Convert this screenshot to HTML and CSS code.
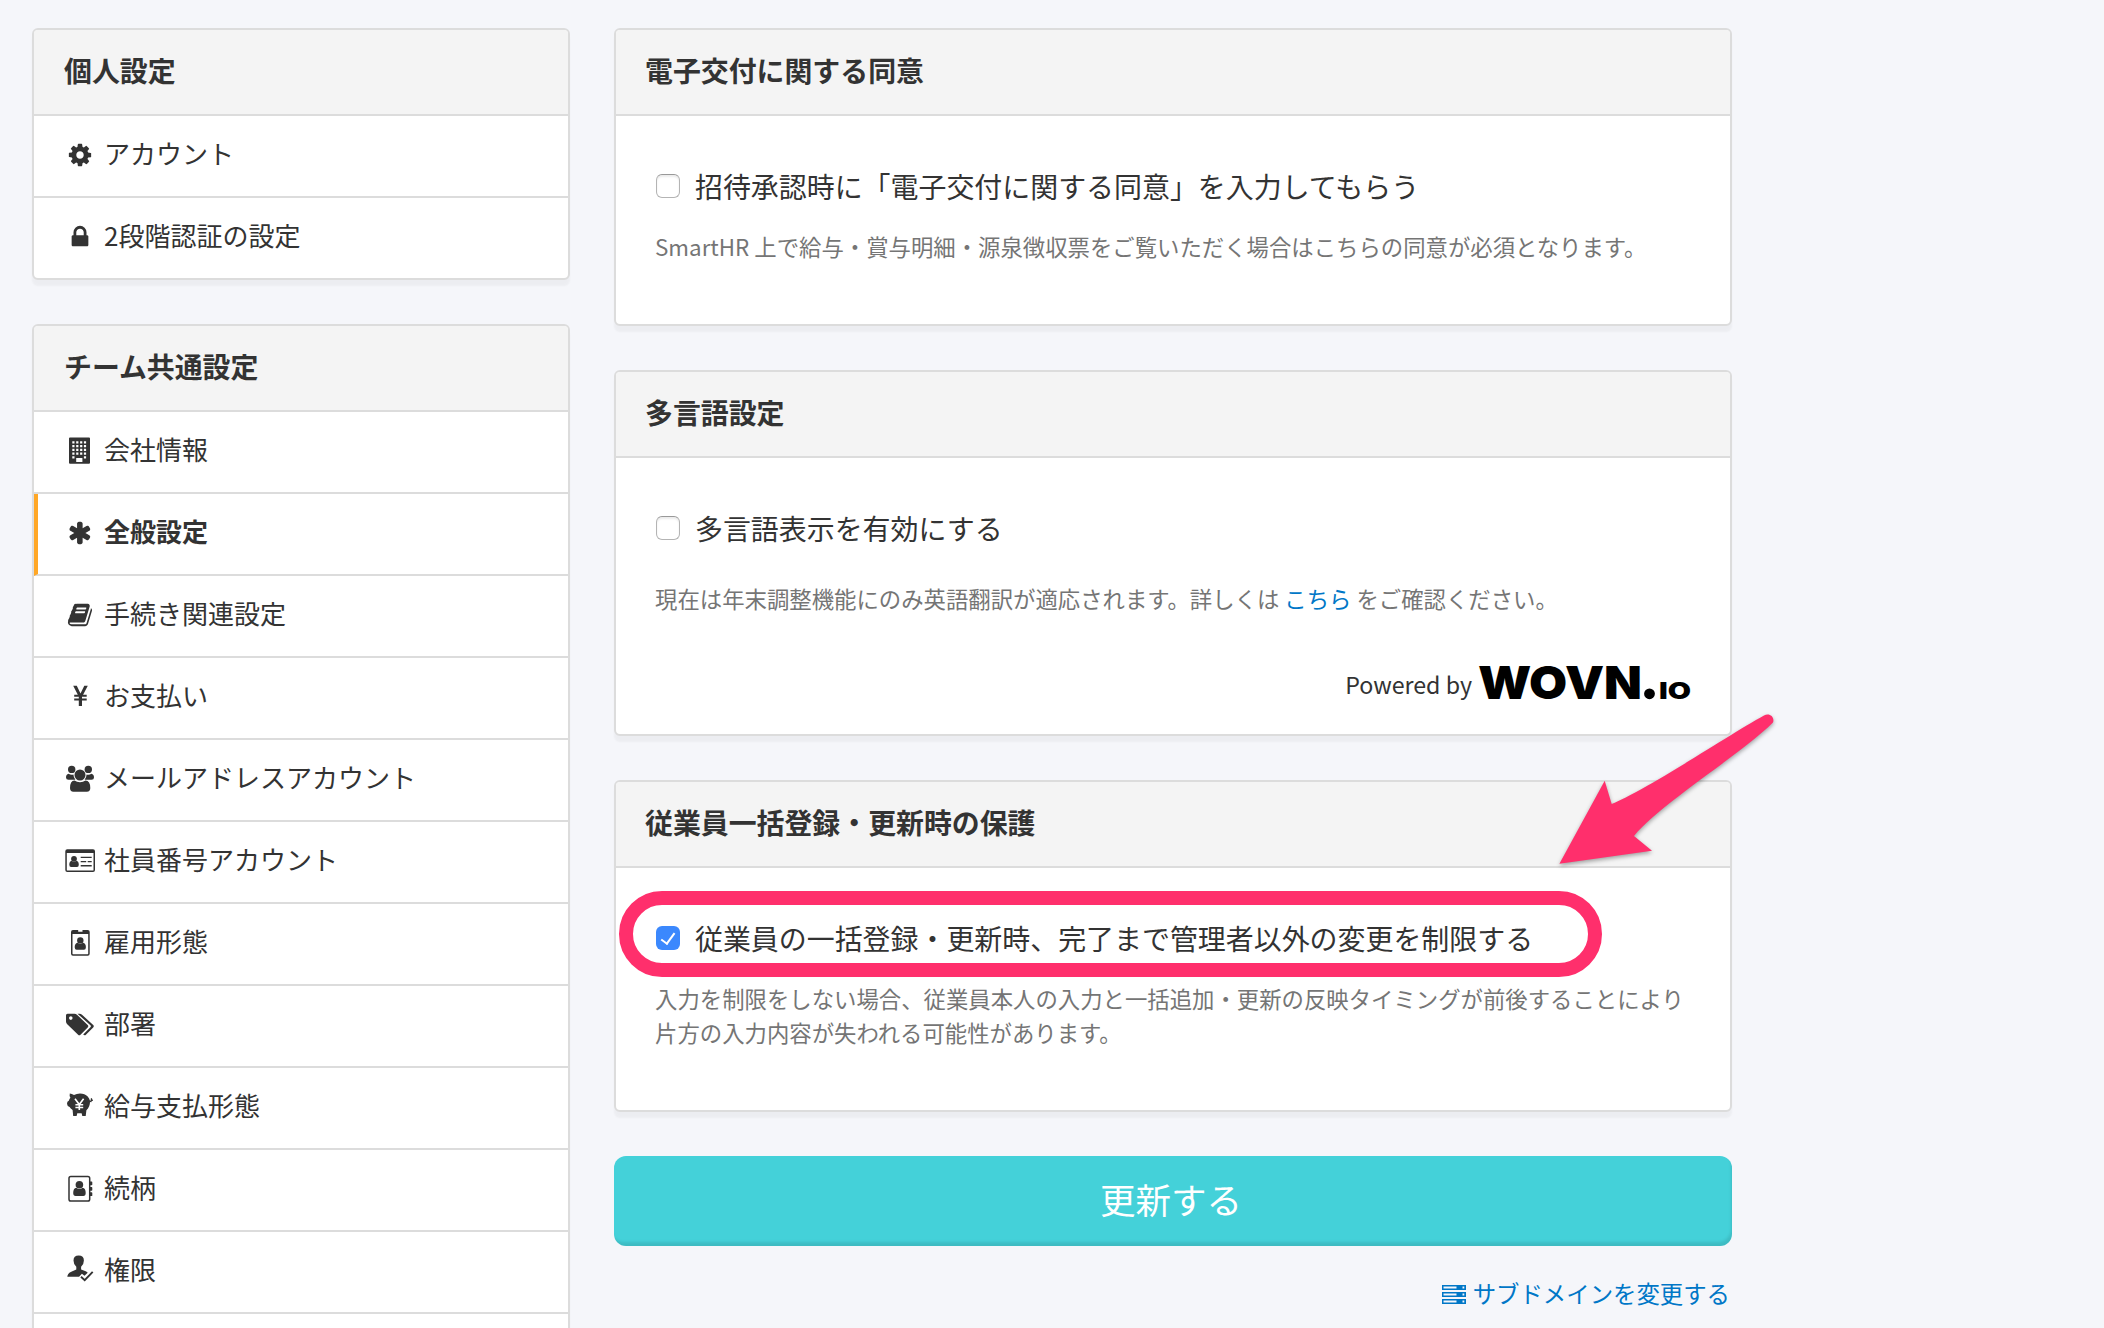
FILE: index.html
```html
<!DOCTYPE html>
<html lang="ja">
<head>
<meta charset="utf-8">
<title>全般設定</title>
<link rel="stylesheet" href="styles.css">
</head>
<body>
<div class="page">
  <aside class="sidebar">
    <section class="panel">
      <h2 class="panel-title">個人設定</h2>
      <ul class="menu">
        <li class="menu-item">
          <svg class="icon" viewBox="-206.8 -68.9 2205.5 1929.8"><path d="M1152 896q0-106-75-181t-181-75-181 75-75 181 75 181 181 75 181-75 75-181zm512-109v222q0 12-8 23t-20 13l-185 28q-19 54-39 91 35 50 107 138 10 12 10 25t-9 23q-27 37-99 108t-94 71q-12 0-26-9l-138-108q-44 23-91 38-16 136-29 186-7 28-36 28h-222q-14 0-24.5-8.5t-11.5-21.5l-28-184q-49-16-90-37l-141 107q-10 9-25 9-14 0-25-11-126-114-165-168-7-10-7-23 0-12 8-23 15-21 51-66.5t54-70.5q-27-50-41-99l-183-27q-13-2-21-12.5t-8-23.5v-222q0-12 8-23t19-13l186-28q14-46 39-92-40-57-107-138-10-12-10-24 0-10 9-23 26-36 98.5-107.5t94.5-71.5q13 0 26 10l138 107q44-23 91-38 16-136 29-186 7-28 36-28h222q14 0 24.5 8.5t11.5 21.5l28 184q49 16 90 37l142-107q9-9 24-9 13 0 25 10 129 119 165 170 7 8 7 22 0 12-8 23-15 21-51 66.5t-54 70.5q26 50 41 98l183 28q13 2 21 12.5t8 23.5z"/></svg>
          <span>アカウント</span>
        </li>
        <li class="menu-item">
          <svg class="icon" viewBox="-206.8 -68.9 2205.5 1929.8"><path d="M640 768h512v-192q0-106-75-181t-181-75-181 75-75 181v192zm832 96v576q0 40-28 68t-68 28h-960q-40 0-68-28t-28-68v-576q0-40 28-68t68-28h32v-192q0-184 132-316t316-132 316 132 132 316v192h32q40 0 68 28t28 68z"/></svg>
          <span>2段階認証の設定</span>
        </li>
      </ul>
    </section>

    <section class="panel">
      <h2 class="panel-title">チーム共通設定</h2>
      <ul class="menu">
        <li class="menu-item">
          <svg class="icon" viewBox="0 0 32 28"><path fill-rule="evenodd" d="M6 .4h19q1 0 1 1v24.300q0 1-1 1H6q-1 0-1-1V1.400q0-1 1-1zM8.300 4.300v2.200h2.200V4.300zm3.900 0v2.200h2.200V4.300zm3.900 0v2.200h2.200V4.300zm3.800 0v2.200h2.200V4.300zM8.300 8.100v2.200h2.200V8.100zm3.900 0v2.200h2.200V8.100zm3.900 0v2.200h2.200V8.100zm3.800 0v2.200h2.200V8.100zM8.300 11.800V14h2.200v-2.200zm3.900 0V14h2.200v-2.200zm3.900 0V14h2.200v-2.200zm3.800 0V14h2.200v-2.200zM8.300 15.500v2.200h2.200v-2.200zm3.900 0v2.200h2.200v-2.200zm3.900 0v2.200h2.200v-2.200zm3.800 0v2.200h2.200v-2.200zM8.300 19.200v2.200h2.200v-2.200zm11.600 0v2.200h2.200v-2.200zM12.200 21v4h6.200v-4z"/></svg>
          <span>会社情報</span>
        </li>
        <li class="menu-item is-active">
          <svg class="icon" viewBox="-260 -68.9 2205.5 1929.8"><path d="M1482 1050q46 26 59.500 77.500t-12.500 97.500l-64 110q-26 46-77.500 59.500t-97.500-12.500l-266-153v307q0 52-38 90t-90 38h-128q-52 0-90-38t-38-90v-307l-266 153q-46 26-97.500 12.500t-77.500-59.500l-64-110q-26-46-12.500-97.500t59.500-77.500l266-154-266-154q-46-26-59.500-77.500t12.500-97.500l64-110q26-46 77.500-59.500t97.500 12.500l266 153v-307q0-52 38-90t90-38h128q52 0 90 38t38 90v307l266-153q46-26 97.500-12.500t77.500 59.500l64 110q26 46 12.500 97.500t-59.500 77.500l-266 154z"/></svg>
          <span>全般設定</span>
        </li>
        <li class="menu-item">
          <svg class="icon" viewBox="-206.8 -68.9 2205.5 1929.8"><path d="M1703 478q40 57 18 129l-275 906q-19 64-76.500 107.500t-122.500 43.500h-923q-77 0-148.500-53.500t-99.500-131.500q-24-67-2-127 0-4 3-27t4-37q1-8-3-21.500t-3-19.500q2-11 8-21t16.500-23.500 16.500-23.500q23-38 45-91.500t30-91.500q3-10 .5-30t-.5-28q3-11 17-28t17-23q21-36 42-92t25-90q1-9-2.500-32t.5-28q4-13 22-30.500t22-22.500q19-26 42.500-84.500t27.500-96.500q1-8-3-25.500t-2-26.500q2-8 9-18t18-23 17-21q8-12 16.500-30.500t15-35 16-36 19.500-32 26.500-23.500 36-11.500 47.500 5.500l-1 3q38-9 51-9h761q74 0 114 56t18 130l-274 906q-36 119-71.500 153.500t-128.500 34.500h-869q-27 0-38 15-11 16-1 43 24 70 144 70h923q29 0 56-15.500t35-41.500l300-987q7-22 5-57 38 15 59 43zm-1064 2q-4 13 2 22.500t20 9.500h608q13 0 25.500-9.500t16.500-22.500l21-64q4-13-2-22.500t-20-9.500h-608q-13 0-25.500 9.500t-16.500 22.500zm-83 256q-4 13 2 22.500t20 9.500h608q13 0 25.500-9.500t16.500-22.500l21-64q4-13-2-22.500t-20-9.500h-608q-13 0-25.500 9.500t-16.500 22.500z"/></svg>
          <span>手続き関連設定</span>
        </li>
        <li class="menu-item">
          <svg class="icon" viewBox="0 0 32 28"><path d="M9.200 2.700h3.600l3.700 7.800 3.800-7.800h3.500l-4.700 9h3.600v2H18v1.800h4.700v2H18V23h-3.200v-5.500h-4.600v-2h4.600v-1.800h-4.600v-2h3.600z"/></svg>
          <span>お支払い</span>
        </li>
        <li class="menu-item">
          <svg class="icon" viewBox="0 0 32 28"><circle cx="7.700" cy="4.400" r="3.700"/><circle cx="24.300" cy="4.400" r="3.700"/><path d="M4.600 8.800q1.400 1 3.100 1 1 0 1.700-.3.100 3 2 5.200H4.500Q2 14.700 2 12.500q0-3.200 2.600-3.700zM27.400 8.800q-1.400 1-3.100 1-1 0-1.700-.3-.1 3-2 5.200h6.900q2.500 0 2.500-2.200 0-3.200-2.600-3.700z"/><circle cx="16" cy="10" r="5.500"/><path d="M10.500 15.600q2.300 1.700 5.500 1.700t5.500-1.700q4.800.4 4.800 7.500 0 3.600-3.500 3.600H9.400Q6 26.700 6 23.100q0-7.100 4.500-7.500z"/></svg>
          <span>メールアドレスアカウント</span>
        </li>
        <li class="menu-item">
          <svg class="icon" viewBox="0 0 32 28"><path fill-rule="evenodd" d="M3.300 2.300h25.700q2 0 2 2V23q0 2-2 2H3.300q-2 0-2-2V4.300q0-2 2-2zM2.800 5.900v17q0 .6.600.6h25.500q.6 0 .6-.6v-17z"/><circle cx="10" cy="11.800" r="2.900"/><path d="M7.600 13.800q2.400 2 4.800 0 2.400.5 2.400 4 0 2.200-1.800 2.200H7.100q-1.800 0-1.800-2.200 0-3.500 2.300-4zM16.700 9.700h11v1.400h-11zM16.700 13.900h5.500v1.400h-5.500zM23.700 13.900h4v1.400h-4zM16.700 18h11v1.400h-11z"/></svg>
          <span>社員番号アカウント</span>
        </li>
        <li class="menu-item">
          <svg class="icon" viewBox="0 0 32 28"><path fill-rule="evenodd" d="M9 1h5.200v1.700h4.300V1h5.200q2 0 2 2v21.700q0 2-2 2H9q-2 0-2-2V3q0-2 2-2zM8.500 5v19.600q0 .6.600.6h14.500q.6 0 .6-.6V5z"/><circle cx="16.300" cy="11.400" r="3.200"/><path d="M13.500 13.700q2.800 2.200 5.600 0 2.800.5 2.800 4.500 0 2.500-2 2.500h-7.200q-2 0-2-2.500 0-4 2.800-4.500z"/></svg>
          <span>雇用形態</span>
        </li>
        <li class="menu-item">
          <svg class="icon" viewBox="0 0 32 28"><path fill-rule="evenodd" d="M3.500 2.700h7q1.400 0 2.500 1L23.700 14q1.200 1.200 0 2.400l-7.200 7.400q-1.200 1.100-2.400 0L3 13q-1-1-1-2.400V4.200q0-1.500 1.500-1.500zM6.800 5.300a1.800 1.800 0 100 3.600 1.800 1.800 0 000-3.600z"/><path d="M13.500 2.700h2q1.400 0 2.500 1L29.200 14q1.200 1.200 0 2.400l-7.300 7.400q-1.300 1.200-2.700-.3l7.200-7.300q1-1 0-2z"/></svg>
          <span>部署</span>
        </li>
        <li class="menu-item">
          <svg class="icon" viewBox="0 0 32 28"><path d="M5.800.6q2 .3 4.200 1.500Q12.500.6 16 .6q4.800 0 7.700 3 1.700 1.800 2.200 4l1-.2q-.8-2.200.6-2.400.9 0 .6 1.800l.9-.2v1.200l-1.200.3-.5 1.200-1.300-.3q0 4.800-3.600 8.200l-.7 5.800h-3.400l-.7-2.700h-4.300l-.7 2.700H9.200L8.600 17Q6.500 15.600 5.600 14 3.200 13.500 3 10.800q0-2.400 1.800-3 .6-1.800 1.600-3Q5.200 2.500 5.800.6z"/><path class="cutout" d="M11 5.800l4.300 5.800 4.300-5.800M15.300 11v6M11.400 11.800h7.800M11.400 14.500h7.800"/></svg>
          <span>給与支払形態</span>
        </li>
        <li class="menu-item">
          <svg class="icon" viewBox="0 0 32 28"><rect class="stroke" x="5" y="1.400" width="20.700" height="24.600" rx="1.800"/><circle cx="15.400" cy="9.700" r="3.800"/><path d="M12.300 12.700q3.200 2.500 6.300 0 3.100.6 3.100 5.300 0 3-2.400 3h-7.700q-2.400 0-2.400-3 0-4.700 3.100-5.300zM26 6.500h1.600q.7 0 .7.700v2.400q0 .7-.7.700H26zM26 12h1.600q.7 0 .7.700v2.400q0 .7-.7.700H26zM26 17.300h1.600q.7 0 .7.700v2.400q0 .7-.7.700H26z"/></svg>
          <span>続柄</span>
        </li>
        <li class="menu-item">
          <svg class="icon" viewBox="0 0 32 28"><path d="M14.700-1.500q5.200 0 5.200 5 0 3.800-2.800 6.300v2.600l4.600 1.900q1.500.6 2 1.400l-3.200 3-2.600-2-2.800 3H3.300q.3-3.300 3.500-4.700l5.500-2.600V9.800Q9.500 7.300 9.500 3.500q0-5 5.200-5z"/><path class="stroke check" d="M17 19.800l3.700 3.400 8-8.400"/></svg>
          <span>権限</span>
        </li>
        <li class="menu-item"></li>
      </ul>
    </section>
  </aside>

  <main class="main">
    <section class="panel">
      <h2 class="panel-title">電子交付に関する同意</h2>
      <div class="panel-body">
        <label class="option"><input class="checkbox" type="checkbox"><span>招待承認時に「電子交付に関する同意」を入力してもらう</span></label>
        <p class="help">SmartHR 上で給与・賞与明細・源泉徴収票をご覧いただく場合はこちらの同意が必須となります。</p>
      </div>
    </section>

    <section class="panel">
      <h2 class="panel-title">多言語設定</h2>
      <div class="panel-body panel-body-language">
        <label class="option"><input class="checkbox" type="checkbox"><span>多言語表示を有効にする</span></label>
        <p class="help help-spaced">現在は年末調整機能にのみ英語翻訳が適応されます。詳しくは <a class="link" href="#">こちら</a> をご確認ください。</p>
        <div class="powered">
          <span>Powered by</span>
          <svg class="wovn" viewBox="0 0 212 60"><text class="wovn-name" x="0" y="47" textLength="164" lengthAdjust="spacingAndGlyphs">WOVN</text><circle cx="171.500" cy="41.800" r="5.400"/><text class="wovn-suffix" x="181" y="47" textLength="32" lengthAdjust="spacingAndGlyphs">IO</text></svg>
        </div>
      </div>
    </section>

    <section class="panel">
      <h2 class="panel-title">従業員一括登録・更新時の保護</h2>
      <div class="panel-body">
        <label class="option"><input class="checkbox" type="checkbox" checked><span>従業員の一括登録・更新時、完了まで管理者以外の変更を制限する</span></label>
        <p class="help">入力を制限をしない場合、従業員本人の入力と一括追加・更新の反映タイミングが前後することにより<br>片方の入力内容が失われる可能性があります。</p>
      </div>
    </section>

    <button class="submit" type="button">更新する</button>
    <a class="subdomain" href="#">
      <svg class="server" viewBox="0 0 24 19"><path fill-rule="evenodd" d="M0 0h24v5H0zM1.500 1.500v2h13v-2zM20.500 1.500v2h1.800v-2zM0 7h24v5H0zM1.500 8.500v2h13v-2zM20.500 8.500v2h1.800v-2zM0 14h24v5H0zM1.500 15.500v2h13v-2zM20.500 15.500v2h1.800v-2z"/></svg>
      <span>サブドメインを変更する</span>
    </a>
  </main>

  <div class="ring"></div>
  <svg class="arrow" viewBox="0 0 230 170"><path d="M9.400 159.800 54.700 76.700l7 23.300C100 84 180 30 214 11.500c5-3 11 1 9 7C190 51 110 100 84 132l18 14.700z"/></svg>
</div>
</body>
</html>
```
FILE: styles.css
```css
* {
  box-sizing: border-box;
}

body {
  margin: 0;
  height: 1328px;
  overflow: hidden;
  background: #f5f6fa;
  color: #333;
  font-family: "Noto Sans CJK JP", sans-serif;
}

.page {
  position: relative;
  display: flex;
  align-items: flex-start;
  gap: 44px;
  height: 1328px;
  padding: 28px 32px 0;
  overflow: hidden;
}

.sidebar,
.main {
  display: flex;
  flex-direction: column;
  gap: 44px;
}

.sidebar {
  width: 538px;
}

.main {
  width: 1118px;
}

.panel {
  border: 2px solid #dcdcdc;
  border-radius: 6px;
  background: #fff;
  box-shadow: 0 6px 2px rgba(0, 0, 0, 0.035);
  overflow: hidden;
}

.panel-title {
  height: 86px;
  margin: 0;
  padding: 0 30px;
  border-bottom: 2px solid #dcdcdc;
  background: #f4f4f4;
  font-size: 27.9px;
  font-weight: 700;
  line-height: 80px;
}

.main .panel-title {
  padding-left: 29px;
}

.menu {
  margin: 0;
  padding: 0;
  list-style: none;
}

.menu-item {
  display: flex;
  gap: 8px;
  height: 82px;
  padding-left: 30px;
  border-bottom: 2px solid #dcdcdc;
  font-size: 26px;
  line-height: 73px;
}

.menu-item:last-child {
  height: 80px;
  border-bottom: 0;
}

.menu-item.is-active {
  padding-left: 26px;
  border-left: 4px solid #ffa726;
  font-weight: 700;
}

.icon {
  width: 32px;
  height: 28px;
  margin-top: 25px;
  fill: #333;
  overflow: visible;
}

.stroke {
  fill: none;
  stroke: #333;
  stroke-width: 1.5;
}

.check {
  stroke-width: 1.9;
}

.cutout {
  fill: none;
  stroke: #fff;
  stroke-width: 1.6;
}

.panel-body {
  padding: 48px 40px 61px;
}

.panel-body-language {
  padding-bottom: 27px;
}

.option {
  display: flex;
  gap: 15px;
  height: 42px;
  font-size: 27.95px;
  line-height: 44px;
}

.checkbox {
  appearance: none;
  width: 24px;
  height: 24px;
  margin: 10px 0 0;
  border: 1px solid #b4b4b4;
  border-top-color: #999;
  border-radius: 6px;
  background: #fff;
  box-shadow: inset 0 2px 2px rgba(0, 0, 0, 0.08);
}

.checkbox:checked {
  position: relative;
  border: 0;
  background: #3b88fd;
  box-shadow: none;
}

.checkbox:checked::after {
  content: "";
  box-sizing: border-box;
  position: absolute;
  left: 8px;
  top: 4px;
  width: 8px;
  height: 14px;
  border: solid #fff;
  border-width: 0 2.5px 2.5px 0;
  transform: rotate(36deg);
}

.help {
  margin: 23px 0 0 -1px;
  color: #757575;
  font-size: 22.38px;
  line-height: 34px;
  white-space: nowrap;
}

.help-spaced {
  margin-top: 33px;
}

.link {
  color: #0077c7;
  text-decoration: none;
}

.powered {
  display: flex;
  justify-content: flex-end;
  gap: 6px;
  height: 50px;
  margin-top: 42px;
  font-size: 23.2px;
  line-height: 54px;
}

.wovn {
  width: 212px;
  height: 60px;
  margin-top: -5px;
  fill: #000;
  overflow: visible;
}

.wovn-name {
  font: 900 46px Inter, sans-serif;
}

.wovn-suffix {
  font: 900 23px Inter, sans-serif;
}

.submit {
  height: 90px;
  padding: 0 4px 6px 0;
  border: 0;
  border-radius: 12px;
  background: #44d1d9;
  box-shadow: inset -2px -5px 3px -1px rgba(0, 0, 0, 0.1);
  color: #fff;
  font-family: inherit;
  font-size: 35.5px;
}

.subdomain {
  display: flex;
  align-self: flex-end;
  gap: 7px;
  margin: -17px 2px 0 0;
  color: #0077c7;
  font-size: 23.4px;
  line-height: 40px;
  text-decoration: none;
}

.server {
  width: 24px;
  height: 19px;
  margin-top: 12px;
  fill: #0077c7;
}

/* Callouts drawn over the form */
.ring {
  position: absolute;
  left: 619px;
  top: 891px;
  width: 983px;
  height: 86px;
  border: 14px solid #ff2f6c;
  border-radius: 43px;
}

.arrow {
  position: absolute;
  left: 1550px;
  top: 704px;
  width: 230px;
  height: 170px;
  fill: #ff2f6c;
  filter: drop-shadow(0 2px 2px rgba(0, 0, 0, 0.35));
}
```
